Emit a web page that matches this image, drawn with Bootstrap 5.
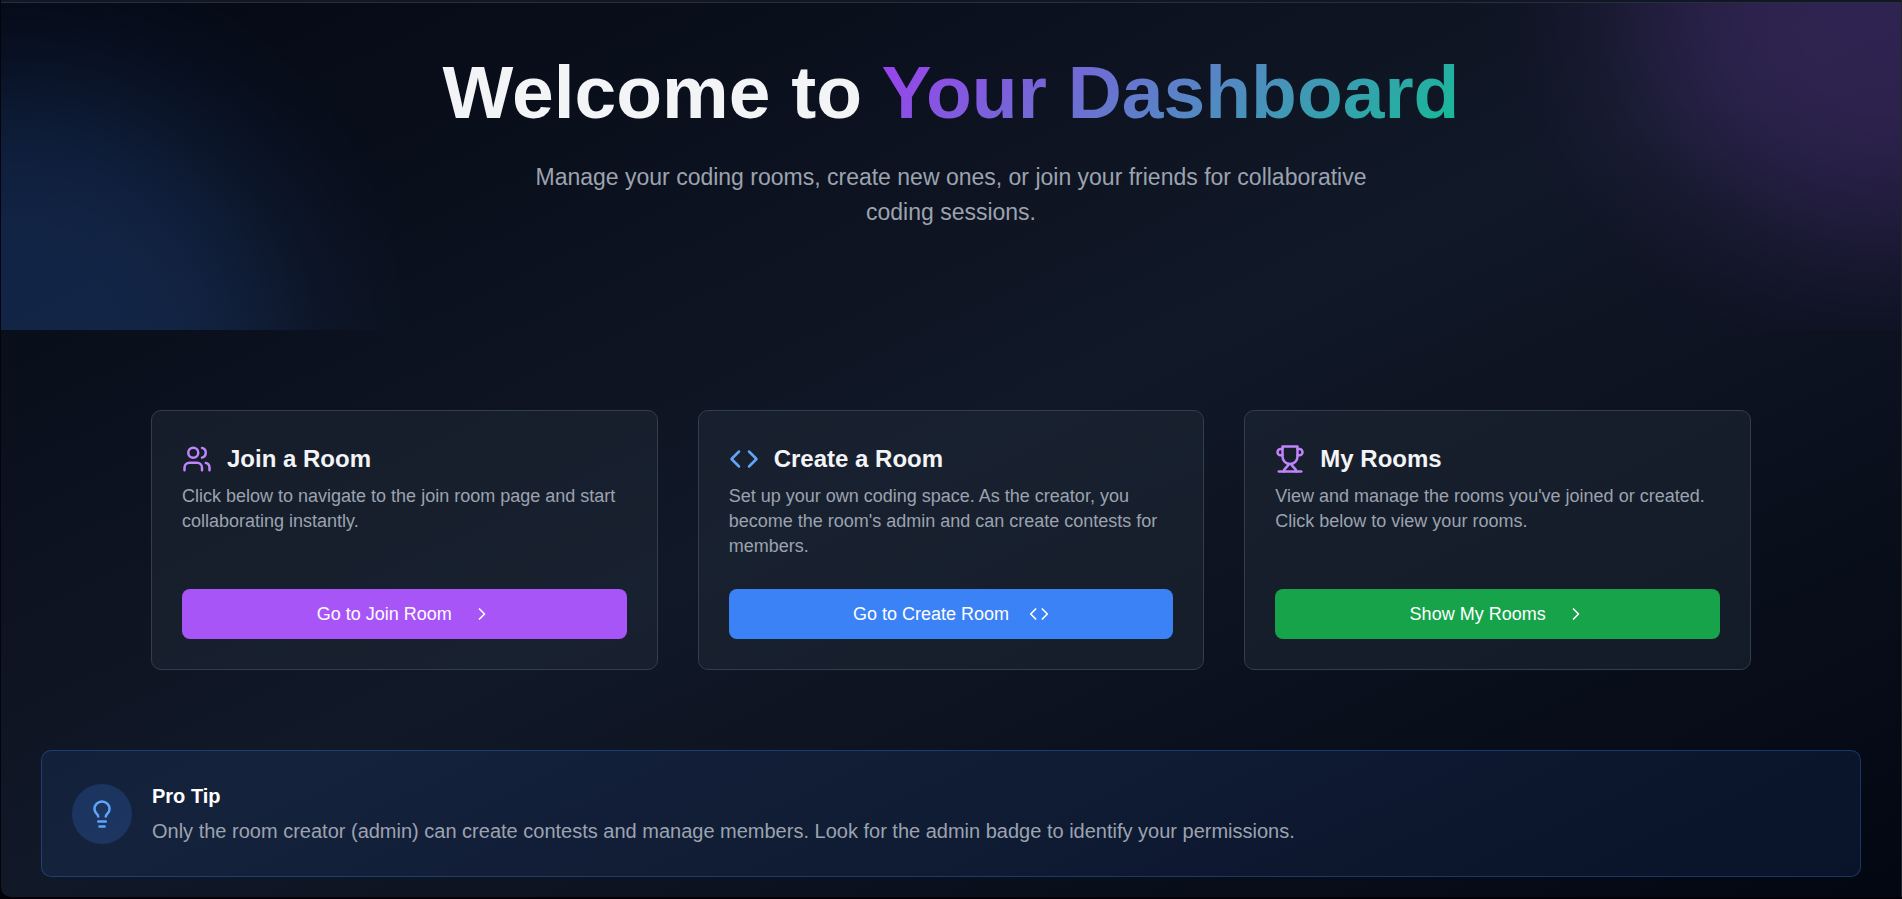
<!DOCTYPE html>
<html lang="en">
<head>
<meta charset="utf-8">
<meta name="viewport" content="width=device-width, initial-scale=1">
<title>Your Dashboard</title>
<link rel="stylesheet" href="https://cdn.jsdelivr.net/npm/bootstrap@5.3.0/dist/css/bootstrap.min.css">
<style>
  body {
    background: #020208;
    color: #f3f4f6;
    font-family: "Liberation Sans", Arial, sans-serif;
    font-size: 20px;
    line-height: 30px;
  }
  .dash-page {
    margin: 0 0 2px;
    border-left: 1px solid #04040c;
    border-right: 1px solid #25262d;
    border-radius: 0 0 0 10px;
    background: linear-gradient(to bottom right, #040813, #111827 50%, #030712);
  }
  .top-strip {
    height: 3px;
    background: #101828;
    border-bottom: 1px solid #2a2e3a;
  }
  .hero {
    padding: 52px 20px 100px;
  }
  .glow {
    width: 530px;
    height: 530px;
    border-radius: 50%;
    filter: blur(80px);
    opacity: .2;
    pointer-events: none;
  }
  .glow-purple { top: 0; right: 0; transform: translate(48%, -54%); background: #a855f7; }
  .glow-blue { bottom: 0; left: 0; transform: translate(-47%, 52%); background: #3b82f6; }
  .hero h1 {
    font-size: 75px;
    line-height: 75px;
    margin-bottom: 30px;
  }
  .gradient-text {
    background: linear-gradient(135deg, #9b40ee, #5686c4 55%, #14bc96);
    -webkit-background-clip: text;
    background-clip: text;
    color: transparent;
  }
  .hero-copy {
    max-width: 840px;
    font-size: 23px;
    line-height: 35px;
    color: #9ca3af;
  }
  .rooms {
    max-width: 1640px;
    padding: 80px 20px;
  }
  .rooms .row { --bs-gutter-x: 40px; --bs-gutter-y: 40px; }
  .room-card {
    background: rgba(31, 41, 55, .5);
    border: 1px solid #343d4b;
    border-radius: 10px;
    color: inherit;
  }
  .room-card .card-body { padding: 30px; }
  .room-title {
    gap: 15px;
    margin-bottom: 8px;
    font-size: 24px;
    line-height: 35px;
  }
  .room-copy {
    margin-bottom: 30px;
    font-size: 18px;
    line-height: 25px;
    color: #9ca3af;
  }
  .room-btn {
    gap: 20px;
    height: 50px;
    border: 0;
    border-radius: 8px;
    font-size: 18px;
    line-height: 25px;
    color: #fff;
    --bs-btn-hover-color: #fff;
  }
  .btn-join { background: #a855f7; }
  .btn-create { background: #3b82f6; }
  .btn-mine { background: #16a34a; }
  .icon {
    fill: none;
    stroke: currentColor;
    stroke-width: 2;
    stroke-linecap: round;
    stroke-linejoin: round;
    flex-shrink: 0;
  }
  .tone-purple { color: #c084fc; }
  .tone-blue { color: #60a5fa; }
  .tip-area { padding: 0 40px 20px; }
  .tip-box {
    gap: 20px;
    padding: 30px;
    border: 1px solid rgba(59, 130, 246, .3);
    border-radius: 10px;
    background: rgba(59, 130, 246, .1);
  }
  .tip-icon {
    width: 60px;
    height: 60px;
    background: rgba(59, 130, 246, .2);
  }
  .tip-box h2 { font-size: 20px; line-height: 30px; margin-bottom: 5px; color: #fff; }
  .tip-box p { color: #9ca3af; }
</style>
</head>
<body>
<div class="dash-page">
  <div class="top-strip"></div>

  <header class="hero position-relative overflow-hidden text-center">
    <div class="glow glow-purple position-absolute"></div>
    <div class="glow glow-blue position-absolute"></div>
    <div class="position-relative">
      <h1 class="fw-bold">Welcome to <span class="gradient-text">Your Dashboard</span></h1>
      <p class="hero-copy mx-auto mb-0">Manage your coding rooms, create new ones, or join your friends for collaborative coding sessions.</p>
    </div>
  </header>

  <main>
    <section class="rooms container-fluid">
      <div class="row row-cols-1 row-cols-lg-3">
        <div class="col">
          <div class="card room-card h-100">
            <div class="card-body d-flex flex-column">
              <h2 class="room-title d-flex align-items-center fw-bold">
                <svg class="icon tone-purple" width="30" height="30" viewBox="0 0 24 24" aria-hidden="true"><path d="M16 21v-2a4 4 0 0 0-4-4H6a4 4 0 0 0-4 4v2"/><circle cx="9" cy="7" r="4"/><path d="M22 21v-2a4 4 0 0 0-3-3.87"/><path d="M16 3.13a4 4 0 0 1 0 7.75"/></svg>
                Join a Room
              </h2>
              <p class="room-copy">Click below to navigate to the join room page and start collaborating instantly.</p>
              <button type="button" class="btn room-btn btn-join w-100 mt-auto d-flex align-items-center justify-content-center">
                Go to Join Room
                <svg class="icon" width="20" height="20" viewBox="0 0 24 24" aria-hidden="true"><path d="m9 18 6-6-6-6"/></svg>
              </button>
            </div>
          </div>
        </div>
        <div class="col">
          <div class="card room-card h-100">
            <div class="card-body d-flex flex-column">
              <h2 class="room-title d-flex align-items-center fw-bold">
                <svg class="icon tone-blue" width="30" height="30" viewBox="0 0 24 24" aria-hidden="true"><path d="m16 18 6-6-6-6"/><path d="m8 6-6 6 6 6"/></svg>
                Create a Room
              </h2>
              <p class="room-copy">Set up your own coding space. As the creator, you become the room's admin and can create contests for members.</p>
              <button type="button" class="btn room-btn btn-create w-100 mt-auto d-flex align-items-center justify-content-center">
                Go to Create Room
                <svg class="icon" width="20" height="20" viewBox="0 0 24 24" aria-hidden="true"><path d="m16 18 6-6-6-6"/><path d="m8 6-6 6 6 6"/></svg>
              </button>
            </div>
          </div>
        </div>
        <div class="col">
          <div class="card room-card h-100">
            <div class="card-body d-flex flex-column">
              <h2 class="room-title d-flex align-items-center fw-bold">
                <svg class="icon tone-purple" width="30" height="30" viewBox="0 0 24 24" aria-hidden="true"><path d="M6 9H4.500a2.500 2.500 0 0 1 0-5H6"/><path d="M18 9h1.500a2.500 2.500 0 0 0 0-5H18"/><path d="M3 22h18"/><path d="M11 16c0 2-4 3-4 6"/><path d="M13 16c0 2 4 3 4 6"/><path d="M18 2H6v8a6 6 0 0 0 12 0V2Z"/></svg>
                My Rooms
              </h2>
              <p class="room-copy">View and manage the rooms you've joined or created. Click below to view your rooms.</p>
              <button type="button" class="btn room-btn btn-mine w-100 mt-auto d-flex align-items-center justify-content-center">
                Show My Rooms
                <svg class="icon" width="20" height="20" viewBox="0 0 24 24" aria-hidden="true"><path d="m9 18 6-6-6-6"/></svg>
              </button>
            </div>
          </div>
        </div>
      </div>
    </section>

    <section class="tip-area">
      <div class="tip-box d-flex align-items-center">
        <div class="tip-icon rounded-circle d-flex align-items-center justify-content-center flex-shrink-0">
          <svg class="icon tone-blue" width="30" height="30" viewBox="0 0 24 24" aria-hidden="true"><path d="M15 14c.2-1 .7-1.700 1.500-2.500 1-.9 1.500-2.200 1.500-3.500A6 6 0 0 0 6 8c0 1 .2 2.200 1.500 3.500.7.7 1.300 1.500 1.500 2.500"/><path d="M9 18h6"/><path d="M10 22h4"/></svg>
        </div>
        <div>
          <h2 class="fw-bold">Pro Tip</h2>
          <p class="mb-0">Only the room creator (admin) can create contests and manage members. Look for the admin badge to identify your permissions.</p>
        </div>
      </div>
    </section>
  </main>
</div>
<script src="https://cdn.jsdelivr.net/npm/bootstrap@5.3.0/dist/js/bootstrap.bundle.min.js"></script>
</body>
</html>
